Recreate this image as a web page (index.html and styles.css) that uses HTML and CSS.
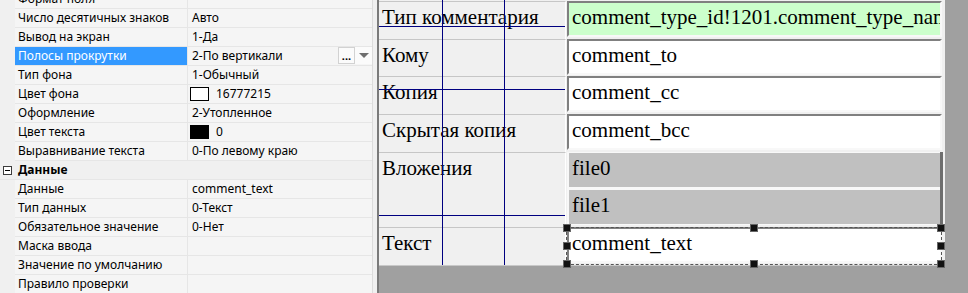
FILE: index.html
```html
<!DOCTYPE html>
<html lang="ru">
<head>
    <meta charset="UTF-8">
    <meta name="viewport" content="width=device-width, initial-scale=1.0">
    <title>Form designer</title>
    <link rel="stylesheet" href="styles.css">
</head>
<body>
    <div class="app">
        <div class="props">
            <div class="prop-list">
                <div class="prop"><div class="gut"></div><div class="plabel">Формат поля</div><div class="pvalue"></div></div>
                <div class="prop"><div class="gut"></div><div class="plabel">Число десятичных знаков</div><div class="pvalue">Авто</div></div>
                <div class="prop"><div class="gut"></div><div class="plabel">Вывод на экран</div><div class="pvalue">1-Да</div></div>
                <div class="prop selected">
                    <div class="gut"></div>
                    <div class="plabel">Полосы прокрутки</div>
                    <div class="pvalue">
                        <span class="pvalue-text">2-По вертикали</span>
                        <span class="dots">...</span>
                        <span class="drop"><span class="arrow"></span></span>
                    </div>
                </div>
                <div class="prop"><div class="gut"></div><div class="plabel">Тип фона</div><div class="pvalue">1-Обычный</div></div>
                <div class="prop"><div class="gut"></div><div class="plabel">Цвет фона</div><div class="pvalue"><span class="swatch white"></span>16777215</div></div>
                <div class="prop"><div class="gut"></div><div class="plabel">Оформление</div><div class="pvalue">2-Утопленное</div></div>
                <div class="prop"><div class="gut"></div><div class="plabel">Цвет текста</div><div class="pvalue"><span class="swatch black"></span>0</div></div>
                <div class="prop"><div class="gut"></div><div class="plabel">Выравнивание текста</div><div class="pvalue">0-По левому краю</div></div>
                <div class="prop category"><span class="toggle"></span><span class="cat-title">Данные</span></div>
                <div class="prop"><div class="gut"></div><div class="plabel">Данные</div><div class="pvalue">comment_text</div></div>
                <div class="prop"><div class="gut"></div><div class="plabel">Тип данных</div><div class="pvalue">0-Текст</div></div>
                <div class="prop"><div class="gut"></div><div class="plabel">Обязательное значение</div><div class="pvalue">0-Нет</div></div>
                <div class="prop"><div class="gut"></div><div class="plabel">Маска ввода</div><div class="pvalue"></div></div>
                <div class="prop"><div class="gut"></div><div class="plabel">Значение по умолчанию</div><div class="pvalue"></div></div>
                <div class="prop"><div class="gut"></div><div class="plabel">Правило проверки</div><div class="pvalue"></div></div>
            </div>
        </div>
        <div class="splitter"></div>
        <div class="designer">
            <div class="form">
                <div class="frow">
                    <div class="flabel">Тип комментария</div>
                    <div class="field green">comment_type_id!1201.comment_type_name</div>
                </div>
                <div class="frow short">
                    <div class="flabel">Кому</div>
                    <div class="field">comment_to</div>
                </div>
                <div class="frow">
                    <div class="flabel">Копия</div>
                    <div class="field">comment_cc</div>
                </div>
                <div class="frow">
                    <div class="flabel">Скрытая копия</div>
                    <div class="field">comment_bcc</div>
                </div>
                <div class="frow tall">
                    <div class="flabel">Вложения</div>
                    <div class="files">
                        <div class="file">file0</div>
                        <div class="file">file1</div>
                    </div>
                </div>
                <div class="frow">
                    <div class="flabel">Текст</div>
                    <div class="field">comment_text</div>
                </div>

                <!-- alignment guides drawn over the form -->
                <div class="guide vert g1"></div>
                <div class="guide vert g2"></div>
                <div class="guide horz h1"></div>
                <div class="guide horz h2"></div>
                <div class="guide horz h3"></div>

                <div class="selection">
                    <span class="handle tl"></span>
                    <span class="handle tm"></span>
                    <span class="handle tr"></span>
                    <span class="handle ml"></span>
                    <span class="handle mr"></span>
                    <span class="handle bl"></span>
                    <span class="handle bm"></span>
                    <span class="handle br"></span>
                </div>
            </div>
        </div>
    </div>
</body>
</html>
```

FILE: styles.css
```css
*
{
    box-sizing: border-box;
}

body
{
    margin: 0;
    width: 968px;
    height: 293px;
    overflow: hidden;
    font-family: "Noto Sans", "Liberation Sans", sans-serif;
}

.app
{
    display: flex;
    height: 293px;
}

/* property grid */

.props
{
    width: 373px;
    flex: none;
    background: #f5f5f5;
    border-right: 1px solid #dcdcdc;
    overflow: hidden;
}

.prop-list
{
    margin-top: -10px;
}

.prop
{
    display: grid;
    grid-template-columns: 15px 173px 1fr;
    height: 19px;
    font-size: 12px;
    line-height: 18px;
    color: #000;
}

.gut
{
    background: #f0f0f0;
}

.plabel
{
    padding-left: 3px;
    border-right: 1px solid #e6e6e6;
    border-bottom: 1px solid #e6e6e6;
    white-space: nowrap;
    overflow: hidden;
}

.pvalue
{
    display: flex;
    align-items: center;
    padding-left: 4px;
    border-bottom: 1px solid #e6e6e6;
    white-space: nowrap;
    overflow: hidden;
}

.prop.selected .plabel
{
    background: #3399ff;
    color: #fff;
}

.pvalue-text
{
    flex: 1;
}

.dots
{
    width: 17px;
    height: 17px;
    align-self: flex-start;
    border: 1px solid #d2d2d2;
    background: #fbfbfb;
    font-weight: bold;
    font-size: 11px;
    line-height: 16px;
    text-align: center;
}

.drop
{
    width: 17px;
    height: 17px;
    align-self: flex-start;
    display: flex;
    align-items: center;
    justify-content: center;
    background: #fbfbfb;
}

.arrow
{
    width: 0;
    height: 0;
    border-left: 5px solid transparent;
    border-right: 5px solid transparent;
    border-top: 5px solid #6e6e6e;
}

.swatch
{
    display: inline-block;
    width: 19px;
    height: 14px;
    margin: 0 7px 0 -2px;
    border: 1px solid #000;
}

.swatch.white
{
    background: #fff;
}

.swatch.black
{
    background: #000;
}

.prop.category
{
    display: flex;
    align-items: center;
    background: #f0f0f0;
    border-bottom: 1px solid #e6e6e6;
}

.toggle
{
    position: relative;
    width: 9px;
    height: 9px;
    margin: 0 6px 0 3px;
    border: 1px solid #3c3c3c;
    background: #fff;
}

.toggle::after
{
    content: "";
    position: absolute;
    left: 1px;
    right: 1px;
    top: 3px;
    height: 1px;
    background: #000;
}

.cat-title
{
    font-weight: bold;
}

.splitter
{
    width: 4px;
    flex: none;
    background: #f0f0f0;
}

/* form designer */

.designer
{
    flex: 1;
    background: #a0a0a0;
    border-left: 2px solid #7a7a7a;
}

.form
{
    position: relative;
    width: 566px;
    padding-top: 1px;
    background: #f0f0f0;
    border-bottom: 1px solid #c8c8c8;
    font-family: "Liberation Serif", "Times New Roman", serif;
    font-size: 21px;
    line-height: 24px;
    color: #000;
}

.frow
{
    display: flex;
    height: 38px;
}

.frow.short
{
    height: 37px;
}

.frow.tall
{
    height: 75px;
}

.flabel
{
    width: 187px;
    flex: none;
    padding: 3px 0 0 3px;
    border-top: 1px solid #c6c6c6;
    border-right: 1px solid #fff;
    white-space: nowrap;
}

.field
{
    width: 375px;
    height: 36px;
    margin-left: 1px;
    padding: 2px 0 0 3px;
    border: 2px solid;
    border-color: #808080 #f8f8f8 #f8f8f8 #808080;
    background: #fff;
    white-space: nowrap;
    overflow: hidden;
}

.field.green
{
    background: #ccffcc;
}

.files
{
    width: 376px;
    height: 73px;
    margin-left: 1px;
    padding: 1px 0 0 2px;
    display: flex;
    flex-direction: column;
    gap: 3px;
    background: #f8f8f8;
    border-right: 3px solid #6e6e6e;
}

.file
{
    height: 34px;
    padding: 3px 0 0 3px;
    background: #c0c0c0;
}

.guide
{
    position: absolute;
    background: #000080;
}

.guide.vert
{
    top: 0;
    width: 1px;
    height: 265px;
}

.guide.horz
{
    left: 0;
    width: 186px;
    height: 1px;
}

.g1 { left: 63px; }
.g2 { left: 125px; }
.h1 { top: 26px; }
.h2 { top: 89px; }
.h3 { top: 215px; }

.selection
{
    position: absolute;
    left: 187px;
    top: 227px;
    width: 376px;
    height: 38px;
    border: 1px dashed #555;
}

.handle
{
    position: absolute;
    width: 8px;
    height: 8px;
    background: #111;
    border: 1px solid #666;
    transform: translate(-50%, -50%);
}

.tl { left: 0; top: 0; }
.tm { left: 50%; top: 0; }
.tr { left: 100%; top: 0; }
.ml { left: 0; top: 50%; }
.mr { left: 100%; top: 50%; }
.bl { left: 0; top: 100%; }
.bm { left: 50%; top: 100%; }
.br { left: 100%; top: 100%; }
```
